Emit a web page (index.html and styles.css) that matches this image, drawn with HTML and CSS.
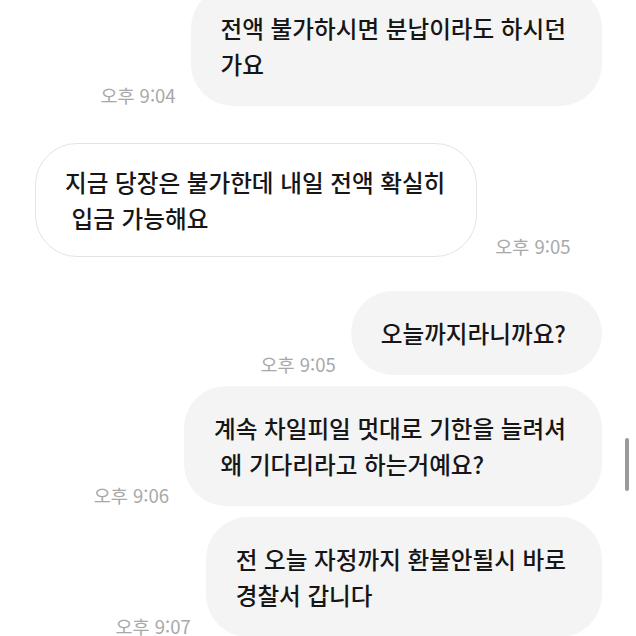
FILE: index.html
```html
<!DOCTYPE html>
<html lang="ko">
<head>
<meta charset="utf-8">
<link rel="stylesheet" href="styles.css">
</head>
<body>
<div class="chat">
  <div class="row sent first">
    <span class="time">오후 9:04</span>
    <div class="bubble">전액 불가하시면 분납이라도 하시던<br>가요</div>
  </div>
  <div class="row received switch">
    <div class="bubble">지금 당장은 불가한데 내일 전액 확실히<br> 입금 가능해요</div>
    <span class="time">오후 9:05</span>
  </div>
  <div class="row sent switch short">
    <span class="time">오후 9:05</span>
    <div class="bubble">오늘까지라니까요?</div>
  </div>
  <div class="row sent">
    <span class="time">오후 9:06</span>
    <div class="bubble">계속 차일피일 멋대로 기한을 늘려셔<br> 왜 기다리라고 하는거예요?</div>
  </div>
  <div class="row sent">
    <span class="time">오후 9:07</span>
    <div class="bubble">전 오늘 자정까지 환불안될시 바로<br>경찰서 갑니다</div>
  </div>
</div>
<div class="scrollbar"></div>
</body>
</html>
```
FILE: styles.css
```css
html, body {
  margin: 0;
  padding: 0;
  background: #ffffff;
  overflow: hidden;
  height: 636px;
}
body {
  font-family: "Noto Sans CJK KR", "Noto Sans", sans-serif;
  color: #161616;
  position: relative;
}
.chat {
  display: flex;
  flex-direction: column;
  padding: 0 34px 0 35px;
  margin-top: -14px;
}
.row {
  display: flex;
  align-items: flex-end;
  margin-top: 11px;
}
.row.first { margin-top: 0; }
.row.switch { margin-top: 37px; }
.row.switch.short { margin-top: 34px; }
.row.sent {
  justify-content: flex-end;
  gap: 15px;
}
.row.received {
  justify-content: flex-start;
  gap: 18px;
}
.bubble {
  font-size: 23.6px;
  font-weight: 500;
  line-height: 36px;
  white-space: pre;
  padding: 24px 36px 24px 30px;
  border-radius: 42px;
  background: #f4f4f4;
}
.received .bubble {
  background: #ffffff;
  border: 1px solid #e4e4e4;
  padding: 20px 31px 20px 29px;
}
.time {
  font-size: 18.5px;
  line-height: 20px;
  color: #a8a8a8;
  white-space: nowrap;
  margin-bottom: 1px;
}
.scrollbar {
  position: absolute;
  left: 625px;
  top: 438px;
  width: 4px;
  height: 53px;
  border-radius: 2px;
  background: #9a9a9a;
}
```
